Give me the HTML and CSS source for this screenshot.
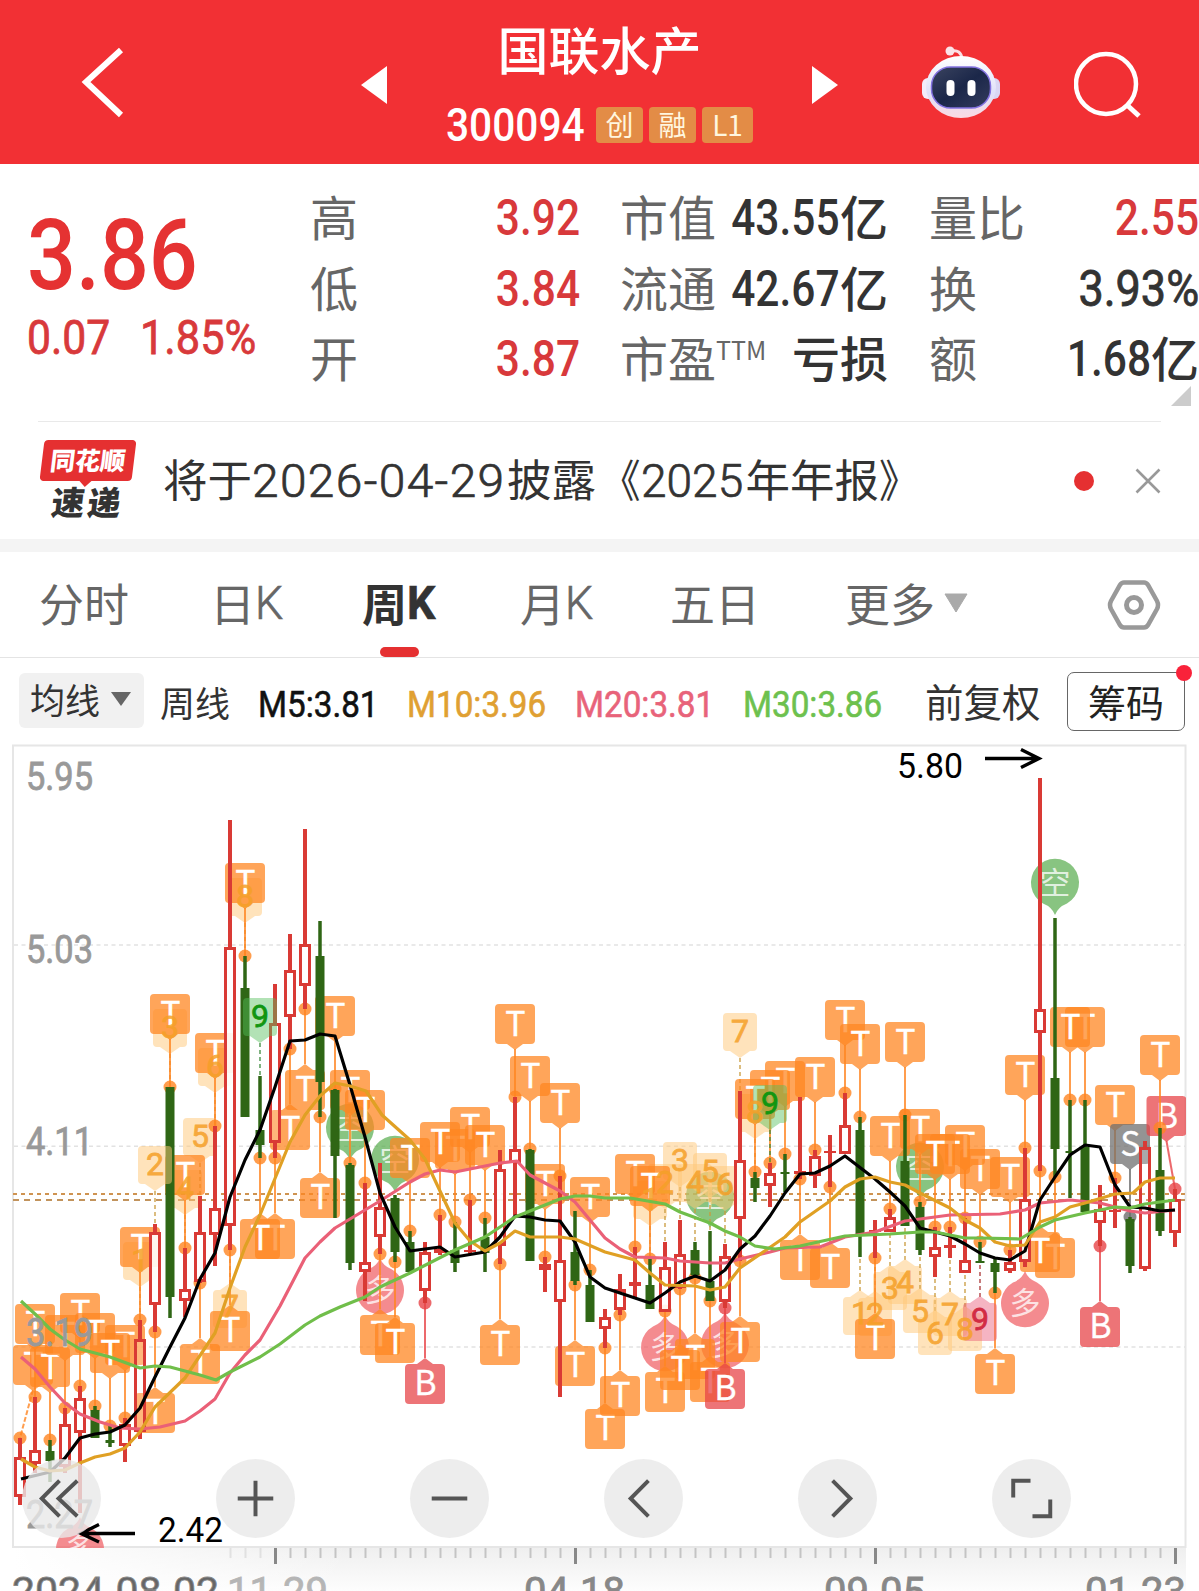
FILE: index.html
```html
<!DOCTYPE html>
<html lang="zh-CN">
<head>
<meta charset="utf-8">
<title>国联水产 300094</title>
<link rel="stylesheet" href="styles.css">
</head>
<body>
<header class="top">
  <svg class="back" width="50" height="80" viewBox="0 0 50 80"><path d="M41 10 6 42 41 75" fill="none" stroke="#fff" stroke-width="6"/></svg>
  <svg class="step" width="26" height="38" viewBox="0 0 26 38"><path d="M0 19 26 0v38z" fill="#fff"/></svg>
  <div class="title">
    <h1>国联水产</h1>
    <div class="sub"><span class="code"><span class="n">300094</span></span><span class="badge">创</span><span class="badge">融</span><span class="badge wide">L1</span></div>
  </div>
  <svg class="step" width="26" height="38" viewBox="0 0 26 38"><path d="M26 19 0 0v38z" fill="#fff"/></svg>
  <svg class="robot" width="80" height="74" viewBox="0 0 80 74">
    <defs>
      <linearGradient id="head" x1="0" y1="0" x2="0" y2="1"><stop offset="0" stop-color="#fff"/><stop offset=".6" stop-color="#dfe0f8"/><stop offset="1" stop-color="#fbd9e2"/></linearGradient>
      <linearGradient id="visor" x1="0" y1="0" x2="1" y2="1"><stop offset="0" stop-color="#3b4460"/><stop offset=".5" stop-color="#1b2749"/><stop offset="1" stop-color="#343c5e"/></linearGradient>
    </defs>
    <path d="M30 6Q40 4 41 14" fill="none" stroke="#fbdfe4" stroke-width="3"/>
    <circle cx="29" cy="6" r="4.500" fill="#fbe3e8"/>
    <rect x="1" y="33" width="14" height="21" rx="6" fill="#f3ecfa"/>
    <rect x="65" y="33" width="14" height="21" rx="6" fill="#d9d6f3"/>
    <ellipse cx="40" cy="42" rx="35" ry="31" fill="url(#head)"/>
    <rect x="10.500" y="22" width="59" height="41" rx="19" fill="url(#visor)" stroke="#8271e0" stroke-width="1.500"/>
    <rect x="25.500" y="35" width="8" height="16" rx="4" fill="#fff"/>
    <rect x="46.500" y="35" width="8" height="16" rx="4" fill="#fff"/>
  </svg>
  <svg class="search" width="73" height="73" viewBox="0 0 73 73"><circle cx="32" cy="35" r="30" fill="none" stroke="#fff" stroke-width="4.500"/><path d="M53 56 65 67" stroke="#fff" stroke-width="5"/></svg>
</header>

<section class="quote">
  <div class="price">
    <div class="last"><span class="n">3.86</span></div>
    <div class="chg"><span class="n">0.07</span><span class="n">1.85%</span></div>
  </div>
  <dl class="stats">
    <dt>高</dt><dd class="up"><span class="n">3.92</span></dd><dt>市值</dt><dd><span class="n">43.55</span>亿</dd><dt>量比</dt><dd class="up"><span class="n">2.55</span></dd>
    <dt>低</dt><dd class="up"><span class="n">3.84</span></dd><dt>流通</dt><dd><span class="n">42.67</span>亿</dd><dt>换</dt><dd><span class="n pct">3.93%</span></dd>
    <dt>开</dt><dd class="up"><span class="n">3.87</span></dd><dt>市盈<sup>TTM</sup></dt><dd>亏损</dd><dt>额</dt><dd><span class="n">1.68</span>亿</dd>
  </dl>
  <i class="corner"></i>
</section>

<section class="news">
  <div class="logo"><div class="logo-top"><b>同花顺</b></div><div class="logo-bottom">速递</div></div>
  <p class="headline">将于<span class="d date"><span>2026-04-29</span></span>披露<span class="q open">《</span><span class="d year"><span>2025</span></span>年年报<span class="q shut">》</span></p>
  <i class="dot"></i>
  <svg class="close" width="26" height="26" viewBox="0 0 26 26"><path d="M1.500 1.500 24.500 24.500M24.500 1.500 1.500 24.500" stroke="#999" stroke-width="2.600"/></svg>
</section>

<nav class="tabs">
  <a>分时</a><a>日<span class="k">K</span></a><a class="on">周<span class="k">K</span></a><a>月<span class="k">K</span></a><a>五日</a><a class="more">更多<svg width="24" height="20" viewBox="0 0 24 20"><path d="M1 1h22L12 19z" fill="#aaa" stroke="#aaa" stroke-linejoin="round"/></svg></a>
  <svg class="gear" width="54" height="52" viewBox="0 0 54 52"><path d="M17 3.500H37Q39.500 3.500 41 6L50 22Q52 26 50 30L41 46Q39.500 48.500 37 48.500H17Q14.500 48.500 13 46L4 30Q2 26 4 22L13 6Q14.500 3.500 17 3.500Z" fill="none" stroke="#999" stroke-width="4.500"/><circle cx="27" cy="26" r="7.500" fill="none" stroke="#999" stroke-width="5"/></svg>
</nav>

<div class="legend">
  <button class="ma">均线<svg width="20" height="14" viewBox="0 0 20 14"><path d="M0 0h20L10 14z" fill="#666"/></svg></button>
  <span class="period">周线</span>
  <span class="m m5"><span>M5:3.81</span></span>
  <span class="m m10"><span>M10:3.96</span></span>
  <span class="m m20"><span>M20:3.81</span></span>
  <span class="m m30"><span>M30:3.86</span></span>
  <span class="adj">前复权</span>
  <button class="chips">筹码<i></i></button>
</div>

<section class="chart">
  <svg id="kline" width="1199" height="851" viewBox="0 740 1199 851"></svg>
  <div class="controls">
    <button><svg viewBox="0 0 80 80"><path d="M38 22 20 40 38 58M56 22 37 40 56 58"/></svg></button>
    <button><svg viewBox="0 0 80 80"><path d="M22 40H58M40 22V58"/></svg></button>
    <button><svg viewBox="0 0 80 80"><path d="M22 40H58"/></svg></button>
    <button><svg viewBox="0 0 80 80"><path d="M45 22 27 40 45 58"/></svg></button>
    <button><svg viewBox="0 0 80 80"><path d="M35 22 53 40 35 58"/></svg></button>
    <button><svg viewBox="0 0 80 80"><path d="M21.500 39V22H39M59 41V58H41"/></svg></button>
  </div>
</section>
<script src="chart.js"></script>
</body>
</html>
```

FILE: styles.css
```css
* { box-sizing: border-box; margin: 0; padding: 0; }
html, body { width: 1199px; height: 1591px; overflow: hidden; background: #fff; }
body { font-family: "Noto Sans CJK SC", sans-serif; color: #333; }
i { font-style: normal; }
button { border: 0; background: none; font: inherit; color: inherit; }
svg { display: block; flex: none; }

.n { display: inline-block; font-family: Roboto, sans-serif; font-weight: 500; white-space: nowrap; transform: scaleX(.85); }

.top { height: 164px; background: #f23034; color: #fff; display: grid; grid-template-columns: 361px 26px 425px 26px 83px 80px 73px 1fr; }
.back { margin: 40px 0 0 80px; }
.step { margin-top: 66px; }
.title { display: flex; flex-direction: column; align-items: center; padding-top: 18px; }
.title h1 { font-size: 51px; font-weight: 500; line-height: 60px; height: 60px; }
.sub { display: flex; align-items: center; height: 36px; margin-top: 29px; width: 307px; }
.code { width: 150px; font-size: 47px; line-height: 36px; margin-top: -4px; }
.code .n { transform-origin: left; margin-right: -30px; transform: scaleX(.865); }
.badge { width: 47px; height: 36px; margin-right: 6px; border-radius: 4px; background: #e38c46; color: #fff6df; font-size: 28px; line-height: 34px; text-align: center; }
.badge.wide { width: 51px; margin-right: 0; }
.robot { grid-column: 6; margin-top: 45px; }
.search { grid-column: 7; margin: 49px 0 0 73px; }

.quote { height: 257px; display: flex; position: relative; }
.price { width: 311px; flex: none; padding: 27px 0 0 27px; color: #e53232; }
.last { font-size: 99px; line-height: 110px; height: 110px; }
.last .n { transform-origin: left; transform: scaleX(.87); line-height: 110px; }
.chg { display: flex; font-size: 49px; line-height: 50px; margin-top: 12px; color: #d8393b; }
.chg .n { font-weight: 400; transform-origin: left; transform: scaleX(.885); -webkit-text-stroke: .8px; }
.chg .n:first-child { width: 113px; transform: scaleX(.87); }
.stats { flex: 1; padding-top: 17px; display: grid; grid-template-columns: 120px 149px 180px 128px 173px 138px; grid-auto-rows: 70.5px; font-size: 48px; line-height: 69px; }
.stats dt { color: #666; white-space: nowrap; margin-left: -1px; }
.stats dt:nth-of-type(3n+2) { padding-left: 41px; }
.stats dt:nth-of-type(3n) { padding-left: 42px; }
.stats dd { display: flex; justify-content: flex-end; font-weight: 500; white-space: nowrap; }
.stats dd .n { font-size: 50px; transform-origin: right; line-height: 75px; }
.stats dd .pct { font-weight: 400; -webkit-text-stroke: .8px; transform: scaleX(.9); }
.stats dd.up { color: #d8393b; }
.stats sup { font-size: 25px; line-height: 0; vertical-align: 17px; font-weight: 400; }
.corner { position: absolute; right: 8px; bottom: 15px; border-style: solid; border-width: 0 0 20px 20px; border-color: transparent transparent #ccc; }

.news { height: 118px; margin: 0 38px; border-top: 1px solid #e9e9e9; display: flex; align-items: center; }
.logo { width: 92px; height: 80px; margin: -2px 2px 0 4px; flex: none; }
.logo-top { position: relative; height: 41px; border-radius: 4px; background: #e53031; color: #fff; transform: skewX(-7deg); text-align: center; line-height: 38px; font-size: 25px; }
.logo-top::after { content: ""; position: absolute; left: 39px; top: 40px; border: solid transparent; border-width: 7px 7px 0; border-top-color: #e53031; }
.logo-top b { font-weight: 800; }
.logo-bottom { margin-top: 2px; font-size: 33px; line-height: 36px; font-weight: 900; letter-spacing: 3px; text-align: center; transform: skewX(-7deg); }
.headline { flex: none; width: 895px; padding-left: 27px; font-size: 44.5px; line-height: 60px; white-space: nowrap; color: #333; margin-top: -3px; }
.d { display: inline-block; font-family: Roboto, sans-serif; font-size: 47px; font-weight: 300; -webkit-text-stroke: .7px; }
.d > span { display: inline-block; transform-origin: left; }
.date { width: 255px; }
.date > span { transform: scaleX(1.02); letter-spacing: 1.3px; }
.year { width: 105px; }
.year > span { transform: scaleX(.98); }
.q { display: inline-block; }
.open { transform: scaleX(.9); transform-origin: right; }
.shut { transform: scaleX(.9); transform-origin: left; }
.dot { flex: none; width: 20px; height: 20px; margin-left: 43px; border-radius: 50%; background: #e53031; }
.close { margin-left: 41px; }

.tabs { height: 119px; border-top: 13px solid #f4f4f4; border-bottom: 1px solid #e4e4e4; display: grid; grid-template-columns: 171px 152px 158px 150px 175px 262px 1fr; padding-left: 39px; align-items: center; font-size: 45px; line-height: 100px; color: #666; }
.tabs a { position: relative; white-space: nowrap; display: flex; align-items: center; height: 105px; padding-bottom: 4px; }
.k { font-family: Roboto, sans-serif; font-size: 47px; transform: scaleX(.95); transform-origin: left; line-height: 104px; font-weight: 300; -webkit-text-stroke: .7px; }
.tabs .on { color: #333; font-weight: 700; }
.on .k { font-weight: 700; }
.on::after { content: ""; position: absolute; left: 18px; bottom: 0; width: 39px; height: 10px; border-radius: 5px; background: #e53031; }
.more svg { margin-left: 9px; }

.legend { height: 83px; display: flex; align-items: center; padding: 4px 0 0 19px; position: relative; }
.ma { width: 125px; height: 55px; margin-top: -3px; border-radius: 6px; background: #f1f1f1; display: flex; align-items: center; padding: 0 0 2px 11px; font-size: 35px; line-height: 50px; }
.ma svg { margin-left: 11px; }
.period { width: 98px; margin-left: 16px; font-size: 35px; line-height: 50px; white-space: nowrap; }
.m { font-family: Roboto, sans-serif; font-size: 36.5px; line-height: 50px; margin-top: 6px; white-space: nowrap; }
.m span { display: inline-block; transform: scaleX(.91); transform-origin: left; -webkit-text-stroke: .6px; }
.m5 { width: 149px; color: #111; }
.m10 { width: 168px; color: #e0a032; }
.m20 { width: 168px; color: #e8637a; }
.m30 { width: 182px; color: #6dc14e; }
.adj { width: 142px; font-size: 38.5px; line-height: 50px; margin-top: -4px; white-space: nowrap; }
.chips { position: relative; width: 118px; height: 59px; margin-top: -1px; border: 1.5px solid #666; border-radius: 7px; font-size: 38px; line-height: 54px; text-align: center; color: #222; }
.chips i { position: absolute; right: -8px; top: -8px; width: 16px; height: 16px; border-radius: 50%; background: #f9223a; }

.chart { position: relative; height: 851px; margin-top: -1px; }
.controls { position: absolute; left: 21.5px; top: 718.5px; display: flex; gap: 115px; }
.controls button { width: 79px; height: 79px; border-radius: 50%; background: rgba(232, 232, 232, .8); }
.controls svg { width: 79px; height: 79px; fill: none; stroke: #555; stroke-width: 4; }

#kline text { font-family: Roboto, "Noto Sans CJK SC", sans-serif; }
#kline .mark { font-family: "Noto Sans CJK SC", sans-serif; font-size: 34px; fill: #fff; stroke: #fff; stroke-width: .3; text-anchor: middle; }
#kline .round { font-family: "Noto Sans CJK SC", sans-serif; font-size: 31px; fill: #fff; fill-opacity: .75; text-anchor: middle; }
#kline .count { font-size: 32px; font-weight: 400; text-anchor: middle; stroke-width: .8; }
#kline .axis { font-size: 38px; fill: #999; stroke: #999; stroke-width: .8; }
#kline .note { font-size: 35px; fill: #000; }
#kline .date { font-size: 38px; fill: #888; stroke: #888; stroke-width: .8; }
```

FILE: chart.js
```js
// Weekly candles: [colour, high, body top, body bottom, low] in drawing units.
const candles = [
  ['r',1438,1457,1497,1505],['r',1397,1450,1464,1473],['g',1440,1451,1461,1482],['r',1408,1424,1467,1473],
  ['r',1386,1398,1433,1513],['g',1406,1410,1438,1438],['g',1426,1440,1443,1447],['r',1418,1424,1446,1462],
  ['r',1320,1339,1432,1439],['r',1224,1232,1305,1332],['g',1087,1087,1297,1318],['r',1248,1289,1301,1317],
  ['r',1196,1232,1282,1283],['r',1126,1208,1235,1266],['r',820,947,1226,1250],['g',956,988,1117,1117],
  ['g',1076,1130,1145,1158],['r',984,1023,1143,1158],['r',934,970,1017,1049],['r',829,944,986,1009],
  ['g',921,956,1082,1117],['g',1089,1090,1156,1218],['g',1163,1165,1263,1270],['r',1183,1262,1272,1301],
  ['r',1163,1207,1237,1254],['g',1195,1198,1252,1262],['g',1231,1242,1272,1272],['r',1242,1252,1291,1303],
  ['r',1215,1249,1253,1255],['g',1222,1250,1263,1272],['r',1200,1250,1252,1254],['g',1218,1237,1253,1272],
  ['r',1150,1169,1246,1264],['r',1097,1149,1163,1215],['g',1149,1150,1261,1261],['r',1257,1264,1270,1292],
  ['r',1176,1260,1302,1397],['g',1211,1252,1281,1285],['g',1270,1285,1322,1322],['r',1309,1317,1329,1348],
  ['r',1274,1289,1310,1315],['r',1247,1282,1286,1297],['g',1259,1285,1309,1309],['r',1242,1267,1312,1311],
  ['r',1220,1254,1288,1289],['g',1242,1250,1275,1278],['g',1231,1281,1301,1301],['r',1244,1256,1302,1308],
  ['r',1091,1160,1219,1261],['g',1172,1178,1188,1202],['r',1163,1173,1186,1207],['g',1154,1172,1174,1192],
  ['r',1097,1171,1174,1179],['r',1150,1156,1176,1188],['r',1135,1151,1153,1187],['r',1093,1125,1154,1154],
  ['g',1117,1130,1234,1257],['r',1220,1230,1232,1258],['r',1209,1217,1232,1232],['g',1115,1161,1226,1226],
  ['g',1202,1207,1250,1255],['r',1227,1247,1257,1277],['r',1227,1245,1248,1258],['r',1218,1260,1273,1273],
  ['g',1242,1261,1263,1263],['g',1258,1263,1272,1293],['r',1250,1262,1271,1273],['r',1148,1199,1262,1267],
  ['r',778,1009,1033,1171],['g',918,1078,1149,1177],['g',1100,1151,1153,1198],['g',1100,1147,1212,1212],
  ['r',1185,1209,1223,1246],['r',1178,1210,1212,1228],['g',1217,1219,1266,1273],['r',1141,1147,1269,1271],
  ['g',1128,1170,1231,1236],['r',1189,1199,1233,1247]
];
const X = k => 20 + 15 * k;
const out = [];
const add = s => out.push(s);

// Frame, grid lines and the date strip
add('<defs><linearGradient id="strip" x1="0" x2="0" y1="0" y2="1"><stop offset="0" stop-color="#efefef"/><stop offset="1" stop-color="#fdfdfd"/></linearGradient>' +
    '<linearGradient id="fade" x1="0" x2="1"><stop offset="0" stop-color="#fff"/><stop offset="1" stop-color="#fff" stop-opacity="0"/></linearGradient>' +
    '<clipPath id="plot"><rect x="13" y="745" width="1173" height="803"/></clipPath></defs>');
add('<rect x="13" y="1548" width="1173" height="43" fill="url(#strip)"/><rect x="13" y="1548" width="340" height="43" fill="url(#fade)"/>');
add('<rect x="13" y="745.500" width="1172.500" height="801.500" fill="none" stroke="#e6e6e6" stroke-width="2"/>');
[945, 1146.3, 1347].forEach(y => add(`<path d="M14 ${y}H1185" stroke="#e2e2e2" stroke-width="1.500" stroke-dasharray="4 3.500"/>`));
add('<path d="M13 1194H1185" stroke="#cf9350" stroke-width="2" stroke-dasharray="4 4"/><path d="M13 1200H1185" stroke="#c2935c" stroke-width="2" stroke-dasharray="6 5"/>');

const clip = [];
const addc = s => clip.push(s);

// Nine-turn sequence counts; digits go above the flags, their plates below
const digits = [];
function count(k, n, up) {
  const c = candles[k], x = X(k), y = up ? c[1] : c[4], top = up ? y - 78 : y + 40;
  const nine = n === 9, box = nine ? (up ? '#55be5a' : '#e85878') : '#ffc878', ink = nine ? (up ? '#119611' : '#d22c44') : '#f5a028';
  const shape = up
    ? `M${x - 13} ${top}h26q4 0 4 4v30q0 4 -4 4h-3l-10 7l-10 -7h-3q-4 0 -4 -4v-30q0 -4 4 -4z`
    : `M${x - 13} ${top}h3l10 -7l10 7h3q4 0 4 4v30q0 4 -4 4h-26q-4 0 -4 -4v-30q0 -4 4 -4z`;
  addc(`<path d="M${x} ${up ? top + 45 : top - 6}V${y}" stroke="${nine ? (up ? '#3c8a3c' : '#a33') : '#c99a3c'}" stroke-width="1.300" stroke-dasharray="4 3"/>`);
  addc(`<path d="${shape}" fill="${box}" fill-opacity="${nine ? .45 : .5}"/>`);
  digits.push(`<text class="count" x="${x}" y="${top + (up ? 29 : 27)}" fill="${ink}" stroke="${ink}" opacity="${nine ? 1 : .85}">${n}</text>`);
}

// Square flags: T, B and S
const tones = { T: '#ff8520', B: '#e74347', S: '#6e6e6e' };
function flag(k, up, letter = 'T', cx = X(k)) {
  const c = candles[k], y = up ? c[1] : c[4], top = up ? y - 93 : y + 61, col = tones[letter];
  const edge = up ? top + 45 : top - 6;
  const tip = up
    ? `M${cx - 16} ${top}h32a4 4 0 0 1 4 4v32a4 4 0 0 1 -4 4h-8l-8 6l-8 -6h-8a4 4 0 0 1 -4 -4v-32a4 4 0 0 1 4 -4z`
    : `M${cx - 16} ${top}h8l8 -6l8 6h8a4 4 0 0 1 4 4v32a4 4 0 0 1 -4 4h-32a4 4 0 0 1 -4 -4v-32a4 4 0 0 1 4 -4z`;
  addc(`<path d="M${cx} ${edge}L${X(k)} ${y}" stroke="${col}" stroke-opacity=".8" stroke-width="2"${k === 0 ? ' stroke-dasharray="5 2"' : ''}/>`);
  addc(`<circle cx="${X(k)}" cy="${y}" r="6.500" fill="${col}" fill-opacity=".8"/>`);
  addc(`<path d="${tip}" fill="${col}" fill-opacity=".74"/><text class="mark" x="${cx + .5}" y="${top + (up ? 31.5 : 31)}">${letter}</text>`);
}
// Round pins: 空 above the high, 多 below the low
function pin(k, up) {
  const c = candles[k], x = X(k), y = up ? c[1] - 35 : c[4] + 36;
  const d = up ? 1 : -1;
  addc(`<path d="M${x - 12} ${y + 20.500 * d}Q${x - 3} ${y + 24 * d} ${x} ${y + 32 * d}Q${x + 3} ${y + 24 * d} ${x + 12} ${y + 20.500 * d}A24 24 0 1 ${up ? 0 : 1} ${x - 12} ${y + 20.500 * d}Z" fill="${up ? '#56ab4b' : '#f05a60'}" fill-opacity=".7"/>`);
  addc(`<text class="round" x="${x}" y="${y + 11}">${up ? '空' : '多'}</text>`);
}
[22, 25, 46, 60, 69].forEach(k => pin(k, true));
[4, 24, 43, 47, 67].forEach(k => pin(k, false));
[1, 3, 4, 5, 6].forEach(i => count(7 + i, i, true));
count(14, 7, false); count(15, 8, true);
for (let i = 1; i <= 8; i++) count(41 + i, i, true);
for (let i = 1; i <= 8; i++) count(55 + i, i, false);
flag(0, true, 'T', 33);
[1,2,3,4,5,7,6,8,10,11,13,15,21,22,23,26,29,28,30,31,33,34,35,36,38,41,42,51,50,49,53,55,56,59,58,60,64,63,62,61,66,67,71,70].forEach(k => flag(k, true));
[9,12,14,17,16,18,19,20,24,25,32,37,39,40,43,45,44,46,48,52,54,57,65,69,68].forEach(k => flag(k, false));
flag(73, true); flag(74, true, 'S'); flag(77, true, 'B', 1166.5); flag(76, true);
[27, 47, 72].forEach(k => flag(k, false, 'B'));

// Candles: hollow red, solid green
candles.forEach(([c, h, t, b, l], k) => {
  const x = X(k);
  if (c === 'g') {
    addc(`<path d="M${x} ${h}V${l}" stroke="#2f6615" stroke-width="3.500"/><rect x="${x - 4.500}" y="${t}" width="9" height="${b - t}" fill="#2f6615"/>`);
  } else {
    addc(`<path d="M${x} ${h}V${t}M${x} ${b}V${l}" stroke="#d93a35" stroke-width="4"/>`);
    addc(b - t < 9
      ? `<rect x="${x - 6}" y="${t}" width="12" height="${b - t}" fill="#d93a35"/>`
      : `<rect x="${x - 4.500}" y="${t + 1.500}" width="9" height="${b - t - 3}" fill="#fff" fill-opacity="${[17, 8, 75].includes(k) ? .2 : .9}" stroke="#d93a35" stroke-width="3"/>`);
  }
});
count(9, 2, true); count(16, 9, true); count(50, 9, true); count(64, 9, false);
digits.forEach(addc);

// Moving averages
const lines = [
  ['#ea6077', '21,1357 35,1369 50,1387 65,1403 80,1414 100,1422 120,1428 140,1429 160,1427 185,1421 200,1411 215,1399 230,1373 245,1355 260,1340 280,1306 305,1258 320,1242 335,1228 350,1219 380,1201 410,1182 425,1174 440,1170 455,1172 470,1169 500,1163 517,1161 530,1175 560,1191 575,1202 605,1238 620,1249 635,1257 665,1258 680,1261 710,1263 725,1263 740,1259 770,1252 785,1248 820,1247 845,1237 875,1232 905,1221 950,1215 1000,1214 1025,1210 1040,1203 1070,1200 1100,1203 1130,1211 1145,1213 1175,1210'],
  ['#000', '21,1479 50,1472 65,1458 80,1438 95,1434 110,1432 125,1425 140,1408 155,1377 170,1347 185,1318 200,1279 215,1253 230,1197 245,1160 260,1130 275,1087 290,1041 305,1040 320,1034 335,1036 350,1085 365,1137 380,1193 395,1227 410,1251 440,1247 455,1257 485,1252 500,1237 515,1216 530,1217 545,1220 560,1221 575,1242 590,1277 605,1288 620,1293 635,1298 650,1303 665,1293 680,1282 695,1276 710,1281 725,1270 740,1249 755,1236 770,1216 785,1193 800,1174 815,1173 830,1166 845,1156 875,1179 890,1192 905,1206 920,1228 935,1232 950,1236 965,1244 980,1253 995,1258 1010,1260 1025,1251 1040,1200 1055,1177 1070,1155 1085,1145 1100,1147 1115,1185 1130,1207 1145,1208 1160,1211 1175,1210'],
  ['#e0a024', '21,1459 35,1467 50,1471 65,1470 80,1463 95,1457 110,1454 125,1448 140,1432 155,1407 185,1378 215,1333 230,1288 245,1247 260,1215 290,1142 305,1115 320,1096 335,1083 350,1086 366,1091 382,1115 410,1140 425,1159 455,1223 470,1241 485,1251 500,1243 515,1231 530,1237 560,1237 575,1239 605,1252 635,1260 650,1273 665,1285 695,1286 710,1290 725,1287 740,1268 785,1237 800,1222 830,1201 845,1187 860,1179 875,1177 890,1182 905,1185 920,1193 950,1208 965,1220 980,1228 995,1242 1010,1246 1025,1245 1040,1222 1055,1217 1070,1207 1085,1203 1115,1194 1133,1193 1145,1182 1160,1178 1175,1178'],
  ['#70be4a', '21,1301 35,1314 50,1329 65,1340 80,1349 110,1357 140,1368 155,1366 170,1367 200,1375 216,1380 230,1372 260,1357 280,1344 305,1325 320,1316 340,1307 365,1297 380,1287 410,1273 455,1250 485,1237 515,1217 545,1205 560,1199 575,1196 590,1196 605,1198 630,1198 665,1204 680,1212 710,1223 725,1231 740,1237 755,1246 775,1249 800,1246 827,1240 845,1236 890,1234 920,1232 935,1232 965,1238 980,1238 1020,1239 1030,1233 1040,1227 1055,1220 1085,1213 1115,1207 1130,1208 1145,1204 1175,1200']
];
lines.forEach(([c, p]) => addc(`<polyline points="${p}" fill="none" stroke="${c}" stroke-width="3.200" stroke-linejoin="round"/>`));
add(`<g clip-path="url(#plot)">${clip.join('')}</g>`);

// Price scale and extremes
[['5.95', 790], ['5.03', 963], ['4.11', 1154.5], ['3.19', 1346], ['2.27', 1528]].forEach(([t, y]) =>
  add(`<text class="axis" x="26" y="${y}" textLength="67" lengthAdjust="spacingAndGlyphs">${t}</text>`));
add('<text class="note" x="897" y="778" textLength="66" lengthAdjust="spacingAndGlyphs">5.80</text>');
add('<path d="M985 758.500H1038M1021 749.500 1039 758.500 1021 767.500" fill="none" stroke="#000" stroke-width="3.400"/>');
add('<text class="note" x="158" y="1541.500" textLength="65" lengthAdjust="spacingAndGlyphs">2.42</text>');
add('<path d="M135 1533.500H82M99 1524.500 81 1533.500 99 1542" fill="none" stroke="#000" stroke-width="3.400"/>');

// Date ticks
for (let k = 14; k < 78; k++) {
  const big = k % 20 === 17;
  add(`<path d="M${X(k) + .5} 1548V${big ? 1564 : 1558}" stroke="${big ? '#888' : '#c4c4c4'}" stroke-width="${big ? 3 : 2}" opacity="${k < 17 ? .4 : 1}"/>`);
}
add('<text class="date" style="fill:#666" x="12" y="1605" textLength="207" lengthAdjust="spacingAndGlyphs">2024-08-02</text>');
[['11-29', 227, .6], ['04-18', 524, 1], ['09-05', 824, 1], ['01-23', 1085, 1]].forEach(([t, x, o]) =>
  add(`<text class="date" x="${x}" y="1605" opacity="${o}" textLength="101" lengthAdjust="spacingAndGlyphs">${t}</text>`));
document.getElementById('kline').innerHTML = out.join('');
```
